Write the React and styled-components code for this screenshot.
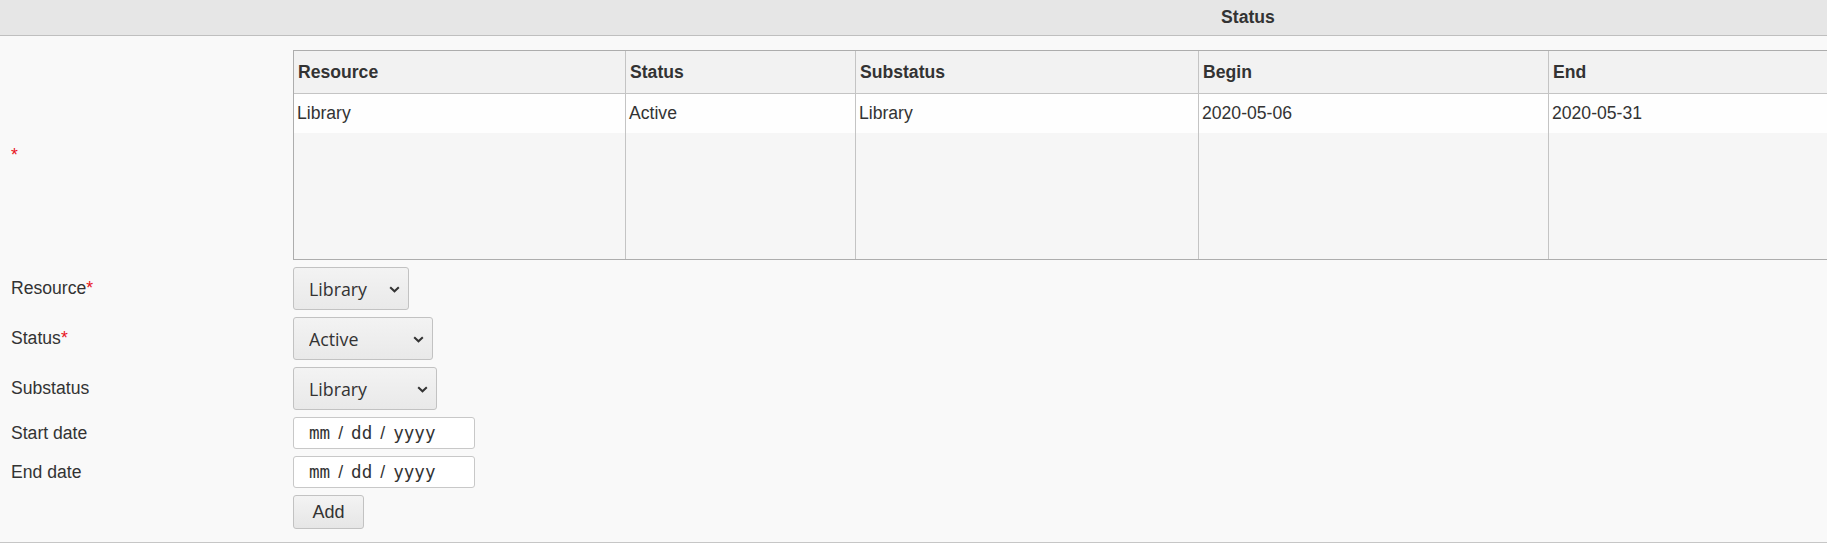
import styled, { createGlobalStyle } from "styled-components";

const GlobalStyle = createGlobalStyle`
    html, body {
        margin: 0;
        padding: 0;
        overflow: hidden;
        background: #f9f9f9;
    }
    body {
        font-family: "Liberation Sans", Arial, sans-serif;
        font-size: 17.6px;
        color: #333;
    }
`

const StyledPage = styled.div`
    width: 2496px;
    min-height: 543px;
    background: #f9f9f9;
`

const StyledTitleBar = styled.div`
    height: 35px;
    display: flex;
    align-items: center;
    justify-content: center;
    background: #e6e6e6;
    border-bottom: 1px solid #bfbfbf;
    font-weight: bold;
    font-size: 17.6px;
    color: #333;
`

const StyledForm = styled.div`
    display: grid;
    grid-template-columns: 293px 1fr;
    row-gap: 7px;
    align-items: center;
    padding-top: 14px;
    padding-bottom: 13px;
    border-bottom: 1px solid #c6c6c6;
`

const StyledLabel = styled.div`
    padding-left: 11px;
    font-size: 17.6px;
    color: #333;
`

const StyledStar = styled.span`
    color: #e8141c;
`

const StyledField = styled.div`
    display: flex;
    align-items: center;
`

const StyledTableBox = styled.div`
    width: 100%;
    height: 210px;
    box-sizing: border-box;
    border: 1px solid #adadad;
    background: #f6f6f6;
    display: grid;
    grid-template-columns: 331px 230px 343px 350px 1fr;
    grid-template-rows: 43px 39px 1fr;
`

const StyledHeadCell = styled.div`
    box-sizing: border-box;
    display: flex;
    align-items: center;
    padding-left: 4px;
    background: #f2f2f2;
    border-bottom: 1px solid #c4c4c4;
    border-left: ${(p) => (p.$first ? "none" : "1px solid #c4c4c4")};
    font-weight: bold;
    color: #333;
`

const StyledCell = styled.div`
    box-sizing: border-box;
    display: flex;
    align-items: center;
    padding-left: 3px;
    background: ${(p) => (p.$filler ? "#f6f6f6" : "#fefefe")};
    border-left: ${(p) => (p.$first ? "none" : "1px solid #c4c4c4")};
    color: #333;
`

const StyledSelectWrap = styled.div`
    position: relative;
    display: inline-flex;
`

const StyledSelect = styled.select`
    appearance: none;
    -webkit-appearance: none;
    box-sizing: border-box;
    width: ${(p) => p.$width}px;
    height: 43px;
    padding: 0 0 0 15px;
    border: 1px solid #c2c2c2;
    border-radius: 3px;
    background: linear-gradient(#f3f3f3, #e9e9e9);
    font-family: "Open Sans", "Noto Sans", sans-serif;
    font-size: 17.8px;
    color: #333;
    outline: none;
`

const StyledChevron = styled.svg`
    position: absolute;
    right: 9px;
    top: 50%;
    margin-top: -3px;
    pointer-events: none;
`

const StyledDateBox = styled.div`
    box-sizing: border-box;
    width: 182px;
    height: 32px;
    display: flex;
    align-items: center;
    padding-left: 15px;
    border: 1px solid #c8c8c8;
    border-radius: 3px;
    background: #fff;
    font-family: "DejaVu Sans Mono", monospace;
    font-size: 17.6px;
    color: #333;
    cursor: text;
`

const StyledDateSep = styled.span`
    margin: 0 8px;
    font-family: "Liberation Sans", Arial, sans-serif;
`

const StyledButton = styled.button`
    box-sizing: border-box;
    width: 71px;
    height: 34px;
    padding: 0;
    border: 1px solid #c2c2c2;
    border-radius: 3px;
    background: linear-gradient(#f3f3f3, #e6e6e6);
    font-family: "Liberation Sans", Arial, sans-serif;
    font-size: 18px;
    color: #333;
`

const columns = ["Resource", "Status", "Substatus", "Begin", "End"];
const rows = [["Library", "Active", "Library", "2020-05-06", "2020-05-31"]];

function Select({ width, value }) {
    return (
        <StyledSelectWrap>
            <StyledSelect $width={width} defaultValue={value}>
                <option>{value}</option>
            </StyledSelect>
            <StyledChevron width="11" height="7" viewBox="0 0 11 7">
                <path d="M1.2 1.2 L5.5 5.3 L9.8 1.2" fill="none" stroke="#333" strokeWidth="2" />
            </StyledChevron>
        </StyledSelectWrap>
    )
}

function DateInput() {
    return (
        <StyledDateBox tabIndex={0}>
            <span>mm</span>
            <StyledDateSep>/</StyledDateSep>
            <span>dd</span>
            <StyledDateSep>/</StyledDateSep>
            <span>yyyy</span>
        </StyledDateBox>
    )
}

function App() {
    return (
        <StyledPage>
            <GlobalStyle />
            <StyledTitleBar>Status</StyledTitleBar>

            <StyledForm>
                <StyledLabel><StyledStar>*</StyledStar></StyledLabel>
                <StyledField>
                    <StyledTableBox>
                        {columns.map((c, i) => (
                            <StyledHeadCell key={c} $first={i === 0}>{c}</StyledHeadCell>
                        ))}
                        {rows.map((r) =>
                            r.map((v, i) => (
                                <StyledCell key={i} $first={i === 0}>{v}</StyledCell>
                            ))
                        )}
                        {columns.map((c, i) => (
                            <StyledCell key={"f" + c} $first={i === 0} $filler />
                        ))}
                    </StyledTableBox>
                </StyledField>

                <StyledLabel>Resource<StyledStar>*</StyledStar></StyledLabel>
                <StyledField><Select width={116} value="Library" /></StyledField>

                <StyledLabel>Status<StyledStar>*</StyledStar></StyledLabel>
                <StyledField><Select width={140} value="Active" /></StyledField>

                <StyledLabel>Substatus</StyledLabel>
                <StyledField><Select width={144} value="Library" /></StyledField>

                <StyledLabel>Start date</StyledLabel>
                <StyledField><DateInput /></StyledField>

                <StyledLabel>End date</StyledLabel>
                <StyledField><DateInput /></StyledField>

                <StyledLabel />
                <StyledField><StyledButton>Add</StyledButton></StyledField>
            </StyledForm>
        </StyledPage>
    )
}

export default App;
